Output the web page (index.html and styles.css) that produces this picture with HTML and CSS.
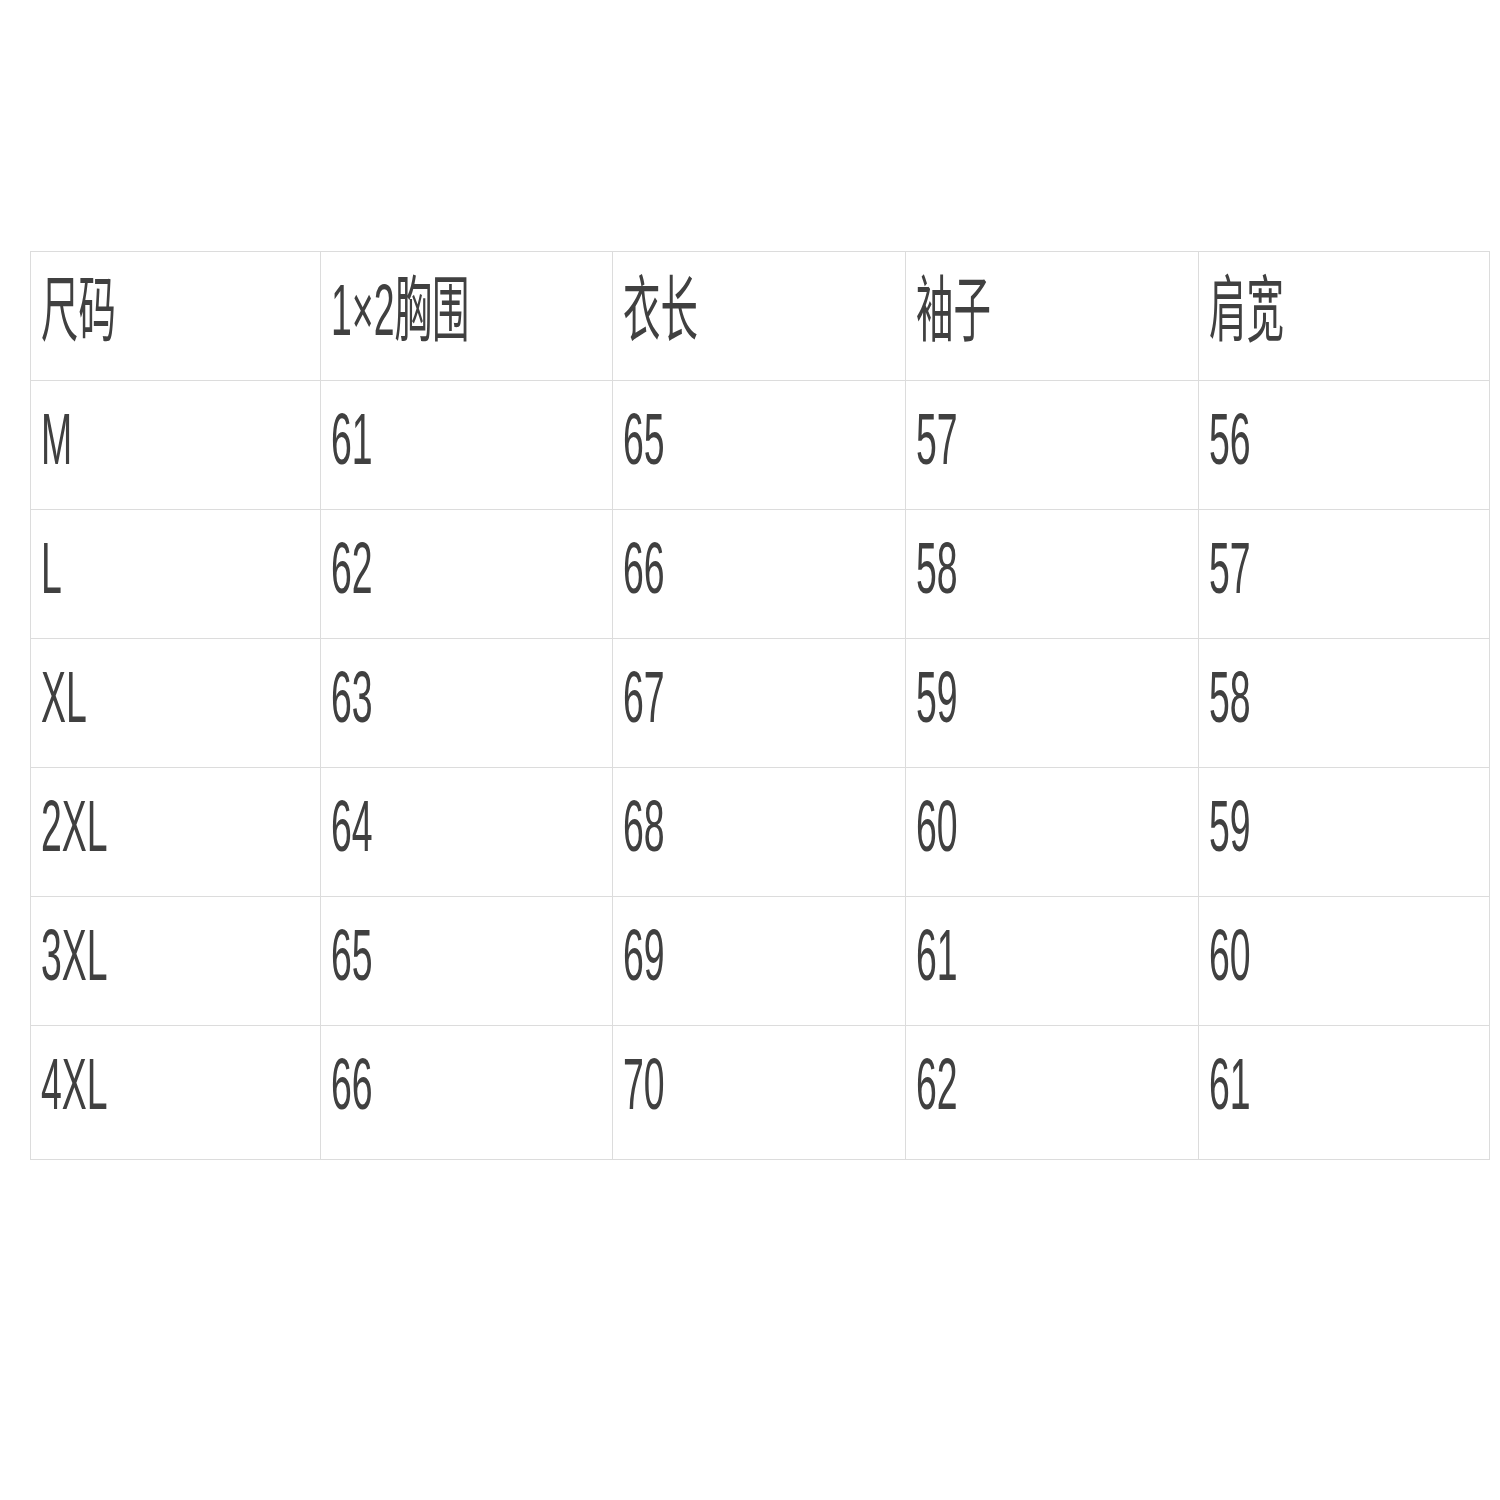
FILE: index.html
```html
<!DOCTYPE html>
<html lang="zh">
<head>
<meta charset="utf-8">
<title>尺码表</title>
<link rel="stylesheet" href="styles.css">
</head>
<body>
<div class="sheet">
  <div class="grid">
    <div class="c"><span class="t">尺码</span></div>
    <div class="c"><span class="t">1×2胸围</span></div>
    <div class="c"><span class="t">衣长</span></div>
    <div class="c"><span class="t">袖子</span></div>
    <div class="c"><span class="t">肩宽</span></div>

    <div class="c"><span class="t">M</span></div>
    <div class="c"><span class="t">61</span></div>
    <div class="c"><span class="t">65</span></div>
    <div class="c"><span class="t">57</span></div>
    <div class="c"><span class="t">56</span></div>

    <div class="c"><span class="t">L</span></div>
    <div class="c"><span class="t">62</span></div>
    <div class="c"><span class="t">66</span></div>
    <div class="c"><span class="t">58</span></div>
    <div class="c"><span class="t">57</span></div>

    <div class="c"><span class="t">XL</span></div>
    <div class="c"><span class="t">63</span></div>
    <div class="c"><span class="t">67</span></div>
    <div class="c"><span class="t">59</span></div>
    <div class="c"><span class="t">58</span></div>

    <div class="c"><span class="t">2XL</span></div>
    <div class="c"><span class="t">64</span></div>
    <div class="c"><span class="t">68</span></div>
    <div class="c"><span class="t">60</span></div>
    <div class="c"><span class="t">59</span></div>

    <div class="c"><span class="t">3XL</span></div>
    <div class="c"><span class="t">65</span></div>
    <div class="c"><span class="t">69</span></div>
    <div class="c"><span class="t">61</span></div>
    <div class="c"><span class="t">60</span></div>

    <div class="c"><span class="t">4XL</span></div>
    <div class="c"><span class="t">66</span></div>
    <div class="c"><span class="t">70</span></div>
    <div class="c"><span class="t">62</span></div>
    <div class="c"><span class="t">61</span></div>
  </div>
</div>
</body>
</html>
```
FILE: styles.css
```css
html, body {
  margin: 0;
  padding: 0;
  background: #ffffff;
}

.sheet {
  padding: 251px 0 0 30px;
}

.grid {
  display: grid;
  grid-template-columns: 290px 292px 293px 293px 291px;
  grid-template-rows: repeat(6, 129px) 134px;
  width: 1460px;
  box-sizing: border-box;
  border-top: 1px solid #dcdcdc;
  border-left: 1px solid #dcdcdc;
}

.c {
  box-sizing: border-box;
  border-right: 1px solid #dcdcdc;
  border-bottom: 1px solid #dcdcdc;
  padding: 22px 0 0 10px;
  overflow: hidden;
  white-space: nowrap;
}

.t {
  display: inline-block;
  font-family: "Liberation Sans", "Noto Sans CJK SC", sans-serif;
  font-size: 72px;
  line-height: 72px;
  color: #404040;
  transform: scaleX(0.52);
  transform-origin: left top;
}
```
